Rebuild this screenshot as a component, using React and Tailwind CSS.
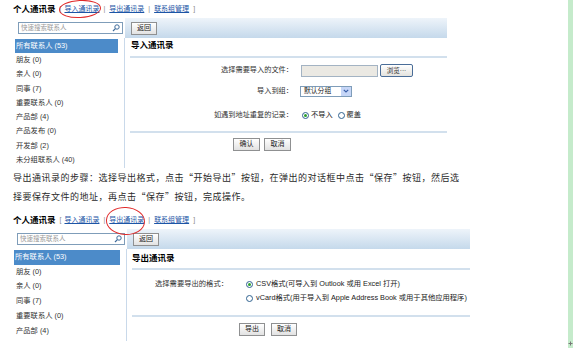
import React from 'react';

const TABS = ['导入通讯录', '导出通讯录', '联系组管理'];

const GROUPS = [
  '所有联系人 (53)',
  '朋友 (0)',
  '亲人 (0)',
  '同事 (7)',
  '重要联系人 (0)',
  '产品部 (4)',
  '产品发布 (0)',
  '开发部 (2)',
  '未分组联系人 (40)',
];

function SearchIcon() {
  return (
    <svg width="8" height="8" viewBox="0 0 8 8" className="shrink-0">
      <circle cx="5" cy="3" r="2.2" fill="none" stroke="#3d6a9a" strokeWidth="1" />
      <line x1="3.4" y1="4.6" x2="1" y2="7" stroke="#3d6a9a" strokeWidth="1.2" />
    </svg>
  );
}

function Btn({ children, w }) {
  return (
    <div className={`h-[13px] ${w} border border-[#8f9091] bg-linear-to-b from-white to-[#e2e2e2] flex items-center justify-center text-[7px] text-[#222]`}>
      {children}
    </div>
  );
}

function Radio({ checked }) {
  return (
    <span className="w-[7px] h-[7px] shrink-0 rounded-full border border-[#2f6290] bg-white flex items-center justify-center">
      {checked && <span className="w-[3px] h-[3px] rounded-full bg-[#2ca12c]" />}
    </span>
  );
}

function Header({ active, ring }) {
  return (
    <div className="h-[18px] flex items-center text-[7px] text-[#8a8a8a]">
      <span className="font-bold text-[8.5px] text-black mr-[4px]">个人通讯录</span>
      <span>[</span>
      {TABS.map((t, i) => (
        <React.Fragment key={t}>
          {i > 0 && <span className="mx-[4px]">|</span>}
          <span className={`relative text-[#1c55a6] underline ${i === 0 ? 'ml-[3px]' : ''}`}>
            {t}
            {i === active && <span className={`absolute rounded-[50%] border border-[#e02a2a] ${ring}`} />}
          </span>
        </React.Fragment>
      ))}
      <span className="ml-[4px]">]</span>
    </div>
  );
}

function Shell({ active, ring, sideW, mainW, boxW, boxMl, selMl, selW, itemH, bodyH, count, children }) {
  return (
    <div className="pl-[13px]">
      <Header active={active} ring={ring} />
      <div className={`flex ${bodyH}`}>
        <div className={`${sideW} flex flex-col`}>
          <div className="h-[20px] flex items-center">
            <div className={`${boxMl} ${boxW} h-[12px] border border-[#7f9db9] bg-white flex items-center justify-between pl-[2px] pr-[2px]`}>
              <span className="text-[6.5px] text-[#9a9a9a]">快速搜索联系人</span>
              <SearchIcon />
            </div>
          </div>
          <div className="flex-1 border-r border-[#c9d9ea] pt-[1px] overflow-hidden">
            {GROUPS.slice(0, count).map((g, i) => (
              <div key={g} className={`${itemH} flex items-center text-[7.3px] ${i === 0 ? `${selMl} ${selW} bg-[#4c8bc9] text-white pl-[1px]` : 'pl-[3px] text-[#333]'}`}>
                {g}
              </div>
            ))}
          </div>
        </div>
        <div className={`${mainW} flex flex-col`}>
          <div className="h-[20px] bg-linear-to-b from-[#eef4fa] to-[#c5d9eb] flex items-center pl-[6px]">
            <Btn w="w-[26px]">返回</Btn>
          </div>
          {children}
        </div>
      </div>
    </div>
  );
}

export default function App() {
  return (
    <div className="w-[573px] h-[348px] overflow-hidden bg-white flex font-['Liberation_Sans','Noto_Sans_CJK_SC',sans-serif] text-[#333]">
      <div className="w-[568px]">
        <Shell
          active={0}
          ring="-left-[5px] -right-[2px] -top-[4px] -bottom-[3px] -rotate-3"
          sideW="w-[112px]"
          mainW="w-[322px]"
          boxW="w-[105px]"
          boxMl="ml-[5px]"
          selMl="ml-[2px]"
          selW="w-[103px]"
          itemH="h-[14.3px]"
          bodyH="h-[150px]"
          count={9}
        >
          <div className="h-[18px] flex items-center pb-[3px] pl-[6px] font-bold text-[8.5px] text-black">导入通讯录</div>
          <div className="h-[2px] bg-[#d2e0ed] ml-[5px]" />
          <div className="mt-[6px] h-[13px] flex items-center text-[7.2px]">
            <div className="w-[168px] text-right">选择需要导入的文件：</div>
            <div className="ml-[8px] w-[77px] h-[12px] border border-[#a3b3c3] bg-[#ebe9e3]" />
            <div className="ml-[2px] w-[33px] h-[13px] rounded-[2px] border border-[#4a6d98] bg-linear-to-b from-white to-[#e4e3de] text-[6.5px] flex items-center justify-center">浏览···</div>
          </div>
          <div className="mt-[8px] h-[12px] flex items-center text-[7.2px]">
            <div className="w-[168px] text-right">导入到组：</div>
            <div className="ml-[7px] w-[52px] h-[11px] border border-[#7f9db9] bg-white flex items-center justify-between">
              <span className="pl-[3px] text-[6.8px] text-[#222]">默认分组</span>
              <span className="w-[10px] h-full bg-[#c6d6f7] flex items-center justify-center">
                <svg width="6" height="4" viewBox="0 0 6 4">
                  <path d="M0.8 0.8 L3 3 L5.2 0.8" fill="none" stroke="#3a5fa8" strokeWidth="1.2" />
                </svg>
              </span>
            </div>
          </div>
          <div className="mt-[12px] h-[13px] flex items-center text-[7.2px]">
            <div className="w-[168px] text-right">如遇到地址重复的记录：</div>
            <div className="ml-[9px] flex items-center gap-[2px]">
              <Radio checked />
              <span className="text-[#222]">不导入</span>
              <span className="ml-[3px]"><Radio /></span>
              <span className="text-[#222]">覆盖</span>
            </div>
          </div>
          <div className="mt-[9px] h-[2px] bg-[#d2e0ed] ml-[5px]" />
          <div className="mt-[5px] pl-[108px] flex gap-[4px]">
            <Btn w="w-[27px]">确认</Btn>
            <Btn w="w-[27px]">取消</Btn>
          </div>
        </Shell>

        <div className="pl-[13px] text-[9px] leading-[19px] tracking-[0.5px] text-[#2a2a2a] font-['Noto_Sans_CJK_SC',sans-serif]">
          <p>导出通讯录的步骤：选择导出格式，点击“开始导出”按钮，在弹出的对话框中点击“保存”按钮，然后选</p>
          <p>择要保存文件的地址，再点击“保存”按钮，完成操作。</p>
        </div>

        <div className="mt-[5px]">
          <Shell
            active={1}
            ring="-left-[3px] -right-[1px] -top-[8px] -bottom-[9px] rotate-3"
            sideW="w-[114px]"
            mainW="w-[343px]"
            boxW="w-[108px]"
            boxMl="ml-[4px]"
            selMl="ml-[1px]"
            selW="w-[106px]"
            itemH="h-[14.75px]"
            bodyH="h-[112px]"
            count={6}
          >
            <div className="h-[19px] flex items-center pb-[1px] pl-[5px] font-bold text-[8.5px] text-black">导出通讯录</div>
            <div className="h-[2px] bg-[#d2e0ed] ml-[5px]" />
            <div className="mt-[8px] h-[13px] flex items-center text-[7.3px]">
              <div className="w-[101px] text-right">选择需要导出的格式：</div>
              <div className="ml-[18px] flex items-center gap-[3px] text-[#222]">
                <Radio checked />
                <span>CSV格式(可导入到 Outlook 或用 Excel 打开)</span>
              </div>
            </div>
            <div className="mt-[1px] h-[13px] pl-[119px] flex items-center gap-[3px] text-[7.3px] text-[#222]">
              <Radio />
              <span>vCard格式(用于导入到 Apple Address Book 或用于其他应用程序)</span>
            </div>
            <div className="mt-[10px] h-[2px] bg-[#d2e0ed] ml-[5px]" />
            <div className="mt-[6px] pl-[112px] flex gap-[6px]">
              <Btn w="w-[26px]">导出</Btn>
              <Btn w="w-[26px]">取消</Btn>
            </div>
          </Shell>
        </div>
      </div>
      <div className="w-[5px] h-full bg-[#c5ebcb] flex flex-col justify-end items-center pb-[2px]">
        <svg width="5" height="5" viewBox="0 0 5 5">
          <path d="M0.5 2.5 H4.5 M2.5 0.5 V4.5" stroke="#777" strokeWidth="1" />
        </svg>
      </div>
    </div>
  );
}
